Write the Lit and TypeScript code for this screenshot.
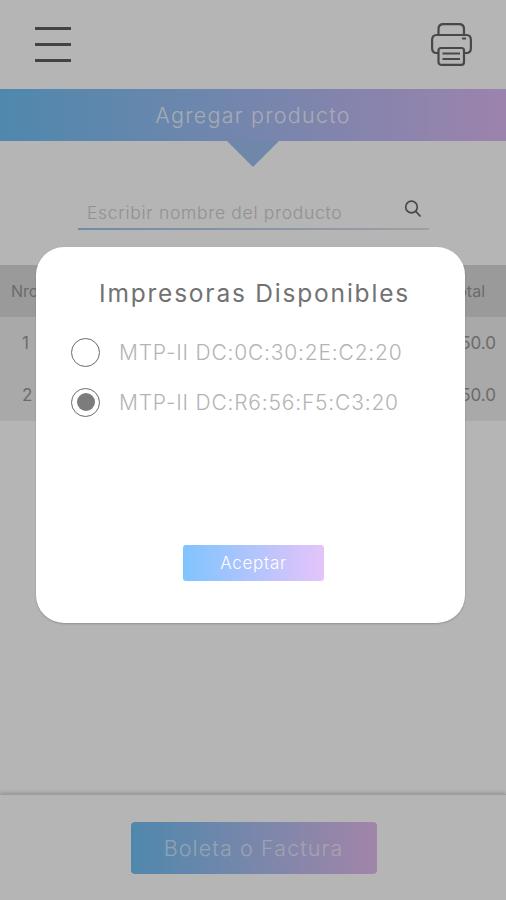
import { LitElement, html, css } from 'lit';
import { customElement, state } from 'lit/decorators.js';

const PRINTERS = ['MTP-II DC:0C:30:2E:C2:20', 'MTP-II DC:R6:56:F5:C3:20'];

const ROWS = [
  { nro: '1', total: '50.0' },
  { nro: '2', total: '50.0' },
];

@customElement('app-root')
export class AppRoot extends LitElement {
  @state() selected = 1;

  static styles = css`
    :host {
      display: block;
      width: 506px;
      height: 900px;
      overflow: hidden;
      font-family: Inter, 'Open Sans', sans-serif;
    }
    .page {
      position: relative;
      display: flex;
      flex-direction: column;
      height: 900px;
      background: #ffffff;
    }
    .top {
      display: flex;
      align-items: center;
      justify-content: space-between;
      height: 88px;
      padding: 0 34px 0 35px;
      box-sizing: border-box;
    }
    .burger {
      display: flex;
      flex-direction: column;
      gap: 13px;
      width: 36px;
    }
    .burger span {
      height: 3px;
      background: #5f5f5f;
    }
    .printer {
      display: block;
      margin-top: 1px;
    }
    .banner {
      position: relative;
      height: 52px;
      margin-top: 1px;
      display: flex;
      align-items: center;
      justify-content: center;
      background: linear-gradient(90deg, #70c0f4, #dcb9f4);
      color: rgba(255, 255, 255, 0.8);
      font-size: 21.5px;
      font-weight: 300;
      letter-spacing: 1.25px;
    }
    .arrow {
      width: 52px;
      height: 26px;
      margin: 0 auto;
      background: #9dc0f0;
      clip-path: polygon(0 0, 100% 0, 50% 100%);
    }
    .search {
      display: flex;
      align-items: center;
      justify-content: space-between;
      box-sizing: border-box;
      width: 351px;
      height: 37px;
      margin: 26px 0 0 78px;
      padding: 3px 6px 0 9px;
      color: #cdcdcd;
      font-size: 17.5px;
      font-weight: 300;
      letter-spacing: 0.7px;
      border-bottom: 2px solid;
      border-image: linear-gradient(90deg, #a0c4ea, #e0e0e8) 1;
    }
    .search svg {
      margin-top: -7px;
    }
    .table {
      margin-top: 35px;
      font-size: 16px;
      color: #979797;
    }
    .row {
      display: flex;
      justify-content: space-between;
      align-items: center;
      height: 52px;
      background: #eeeeee;
    }
    .head {
      background: #dadada;
      padding: 0 21px 0 11px;
    }
    .body {
      padding: 0 10px 0 22px;
      font-size: 17px;
    }
    .spacer {
      flex: 1;
    }
    .footer {
      display: flex;
      justify-content: center;
      align-items: center;
      height: 105px;
      border-top: 1px solid #dddddd;
      box-shadow: 0 -2px 3px rgba(0, 0, 0, 0.14);
    }
    .invoice {
      display: flex;
      align-items: center;
      justify-content: center;
      width: 246px;
      height: 52px;
      margin-left: 1px;
      border-radius: 4px;
      background: linear-gradient(90deg, #70c0f4, #e4bcee);
      color: rgba(255, 255, 255, 0.6);
      font-size: 21.5px;
      font-weight: 300;
      letter-spacing: 1.1px;
    }
    .overlay {
      position: absolute;
      inset: 0;
      display: flex;
      justify-content: center;
      align-items: flex-start;
      padding: 247px 5px 0 0;
      box-sizing: border-box;
      background: rgba(0, 0, 0, 0.29);
    }
    .modal {
      display: flex;
      flex-direction: column;
      box-sizing: border-box;
      width: 429px;
      height: 376px;
      padding: 30px 0 0 35px;
      border-radius: 28px;
      background: #ffffff;
      box-shadow: 0 1px 2px rgba(0, 0, 0, 0.2);
    }
    .title {
      margin: 0 0 18px;
      padding-left: 28px;
      font-size: 24.5px;
      line-height: 32px;
      font-weight: 400;
      color: #727272;
      letter-spacing: 1.8px;
      white-space: nowrap;
    }
    .option {
      display: flex;
      align-items: center;
      gap: 19px;
      height: 50px;
      font-size: 21px;
      font-weight: 300;
      color: #b4b4b4;
      letter-spacing: 0.8px;
      white-space: nowrap;
    }
    .radio {
      display: flex;
      align-items: center;
      justify-content: center;
      box-sizing: border-box;
      width: 29px;
      height: 29px;
      flex: none;
      border: 1.6px solid #6a6a6a;
      border-radius: 50%;
    }
    .radio i {
      width: 18px;
      height: 18px;
      border-radius: 50%;
      background: #7c7c7c;
    }
    .accept {
      display: flex;
      align-items: center;
      justify-content: center;
      align-self: flex-start;
      width: 141px;
      height: 36px;
      margin: 118px 0 0 112px;
      border-radius: 3px;
      background: linear-gradient(90deg, #80c4ff, #e4c4fa);
      color: #ffffff;
      font-size: 17px;
      font-weight: 300;
      letter-spacing: 0.7px;
    }
  `;

  render() {
    return html`
      <div class="page">
        <div class="top">
          <div class="burger"><span></span><span></span><span></span></div>
          <svg class="printer" width="41" height="43" viewBox="0 0 41 43" fill="none" stroke="#666666" stroke-width="2.2">
            <path d="M7.5 12V6C7.5 3 9.5 1.2 12.5 1.2H28C31 1.2 33 3 33 6V12" />
            <path d="M7 30H5.5C2.8 30 1.1 28 1.1 25V17C1.1 14 2.8 12 5.5 12H35.5C38.2 12 39.9 14 39.9 17V25C39.9 28 38.2 30 35.5 30H33" />
            <rect x="7.5" y="25" width="25.5" height="16.8" rx="2.5" />
            <path d="M11.5 30.5H29M11.5 36H29" />
            <path d="M31 15.5H35" stroke-width="2" />
          </svg>
        </div>
        <div class="banner">Agregar producto</div>
        <div class="arrow"></div>
        <div class="search">
          <span>Escribir nombre del producto</span>
          <svg width="20" height="20" viewBox="0 0 20 20" fill="none" stroke="#666666" stroke-width="1.7">
            <circle cx="8.5" cy="8" r="5.8" />
            <path d="M12.8 12.4L17.5 17.5" />
          </svg>
        </div>
        <div class="table">
          <div class="row head"><span>Nro</span><span>Total</span></div>
          ${ROWS.map(
            (r) => html`<div class="row body"><span>${r.nro}</span><span>${r.total}</span></div>`,
          )}
        </div>
        <div class="spacer"></div>
        <div class="footer"><div class="invoice">Boleta o Factura</div></div>
        <div class="overlay">
          <div class="modal">
            <h2 class="title">Impresoras Disponibles</h2>
            ${PRINTERS.map(
              (name, i) => html`
                <div class="option" @click=${() => (this.selected = i)}>
                  <span class="radio">${i === this.selected ? html`<i></i>` : ''}</span>
                  <span>${name}</span>
                </div>
              `,
            )}
            <div class="accept">Aceptar</div>
          </div>
        </div>
      </div>
    `;
  }
}
